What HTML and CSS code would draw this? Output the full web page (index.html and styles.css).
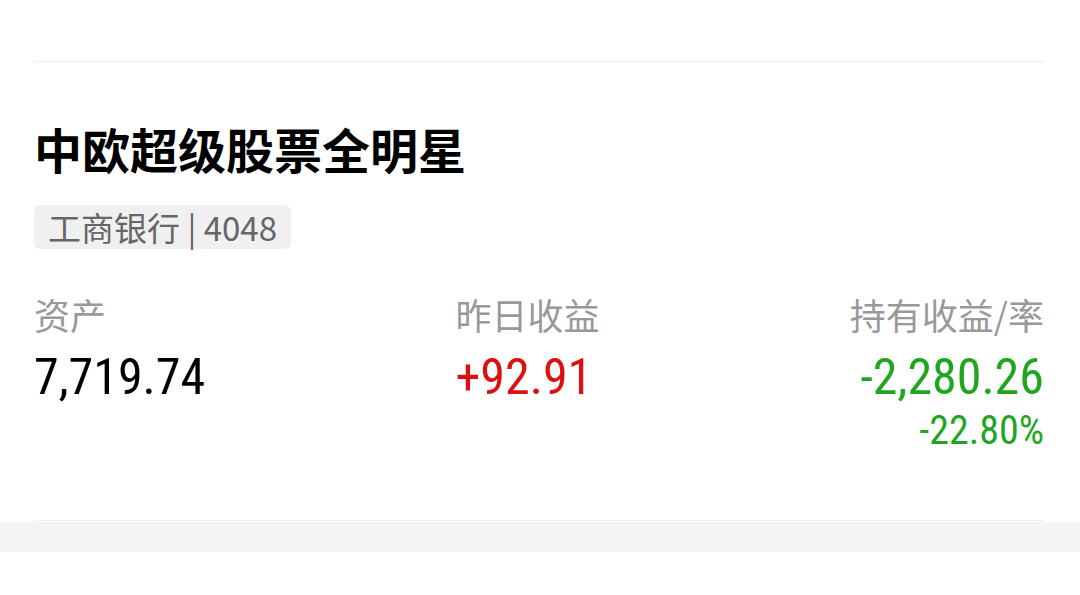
FILE: index.html
```html
<!DOCTYPE html>
<html lang="zh-CN">
<head>
  <meta charset="UTF-8">
  <meta name="viewport" content="width=device-width, initial-scale=1.0">
  <title>持仓详情</title>
  <link rel="stylesheet" href="styles.css">
</head>
<body>

  <div class="card">
    <h1 class="fund-name">中欧超级股票全明星</h1>
    <span class="fund-tag">工商银行 | 4048</span>

    <div class="stats">
      <div class="stat">
        <div class="label">资产</div>
        <div class="value">7,719.74</div>
      </div>
      <div class="stat">
        <div class="label">昨日收益</div>
        <div class="value up">+92.91</div>
      </div>
      <div class="stat right">
        <div class="label">持有收益/率</div>
        <div class="value down">-2,280.26</div>
        <div class="rate down">-22.80%</div>
      </div>
    </div>
  </div>

  <div class="gap-band"></div>

</body>
</html>
```

FILE: styles.css
```css
body {
  margin: 0;
  background: #fff;
  font-family: "Noto Sans CJK SC", sans-serif;
}
.card {
  margin: 61px 36px 0 34px;
  padding: 0 0 70px;
  border-top: 1px solid #eeeeee;
  border-bottom: 1px solid #eeeeee;
}
.fund-name {
  margin: 56px 0 0;
  font-size: 48px;
  font-weight: 700;
  line-height: 60px;
  color: #000;
}
.fund-tag {
  display: inline-block;
  margin-top: 27px;
  padding: 0 14px;
  height: 44px;
  line-height: 44px;
  font-size: 33px;
  color: #666;
  background: #f0f0f0;
  border-radius: 6px;
}
.stats {
  display: flex;
  justify-content: space-between;
  margin-top: 43px;
}
.stat.right {
  text-align: right;
}
.label {
  font-size: 36px;
  line-height: 44px;
  color: #999;
}
.value {
  margin-top: 15px;
  font-family: "Roboto Condensed", Roboto, sans-serif;
  font-size: 50px;
  line-height: 52px;
  color: #000;
}
.rate {
  margin-top: 9px;
  font-family: "Roboto Condensed", Roboto, sans-serif;
  font-size: 40px;
  line-height: 38px;
}
.up {
  color: #dd1010;
}
.down {
  color: #1fa51f;
}
.gap-band {
  margin-top: 1px;
  height: 30px;
  background: #f4f4f4;
}
```
